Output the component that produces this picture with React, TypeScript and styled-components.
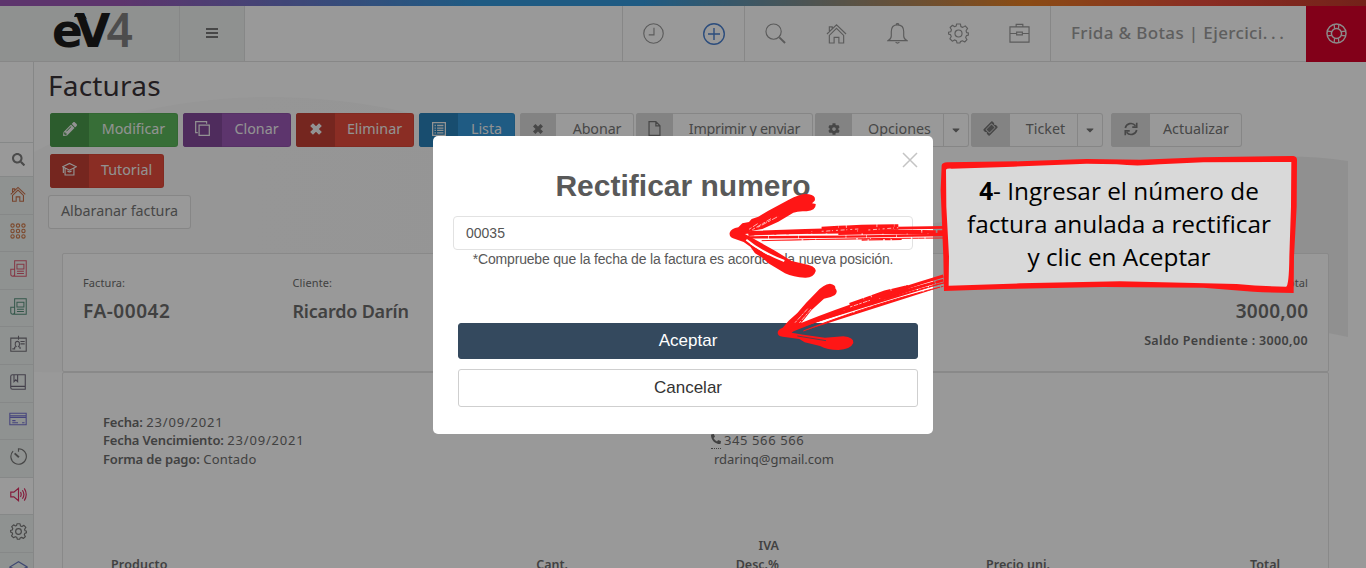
import React from "react";
import styled, { createGlobalStyle } from "styled-components";
import { FaPencilAlt, FaCog, FaPhoneAlt, FaCaretDown, FaTicketAlt, FaSearch } from "react-icons/fa";

const Global = createGlobalStyle`
  * { box-sizing: border-box; }
  body { margin: 0; background: #fff; font-family: "Noto Sans", sans-serif; overflow: hidden; }
`;

const Page = styled.div`
  position: relative;
  width: 1366px;
  height: 568px;
  overflow: hidden;
  display: flex;
  flex-direction: column;
  background: #fff;
`;
const RainbowBar = styled.div`
  height: 6px;
  flex: none;
  background: linear-gradient(90deg, #9b59b6 0%, #9b59b6 9%, #3498db 35%, #3498db 47%, #e67e22 75%, #e74c3c 88%, #c0392b 100%);
`;
const Header = styled.header`
  display: flex;
  height: 56px;
  flex: none;
  border-bottom: 1px solid #e2e2e2;
`;
const LogoCell = styled.div`
  width: 180px;
  background: #eef2f1;
  border-right: 1px solid #dfe2e2;
`;
const LogoArt = styled.svg`
  display: block;
  overflow: visible;
`;
const MenuCell = styled.div`
  width: 65px;
  background: #eef2f1;
  border-right: 1px solid #dfe2e2;
  padding: 22px 0 0 26px;
  display: flex;
  flex-direction: column;
  gap: 2px;
`;
const MenuLine = styled.i`
  width: 12px;
  height: 2px;
  background: #777;
`;
const HeaderSpacer = styled.div`
  flex: 1;
`;
const IconGroup = styled.div`
  display: flex;
  border-left: 1px solid #e2e2e2;
`;
const IconCell = styled.div<{ $color?: string; $w?: number }>`
  width: ${(p) => p.$w ?? 61}px;
  display: flex;
  align-items: center;
  justify-content: center;
  color: ${(p) => p.$color ?? "#989898"};
`;
const Company = styled.div`
  width: 256px;
  border-left: 1px solid #e2e2e2;
  padding: 14px 0 0 20px;
  font-size: 17px;
  line-height: 25px;
  letter-spacing: 0.36px;
  color: #9d9d9d;
  font-weight: 500;
  white-space: nowrap;
`;
const Dots = styled.span`
  letter-spacing: 3.6px;
`;
const HelpCell = styled.div`
  width: 60px;
  height: 56px;
  padding-bottom: 2px;
  background: #d9002b;
  color: #e8e8e8;
  display: flex;
  align-items: center;
  justify-content: center;
`;

const Body = styled.div`
  display: flex;
  flex: 1;
  min-height: 0;
`;
const Sidebar = styled.nav`
  width: 34px;
  flex: none;
  border-right: 1px solid #dfe2e2;
  padding-top: 80px;
`;
const SideItem = styled.div<{ $h: number; $color: string; $plain?: boolean }>`
  height: ${(p) => p.$h}px;
  border-top: 1px solid #e0e3e3;
  background: ${(p) => (p.$plain ? "#fff" : "#eff4f2")};
  color: ${(p) => p.$color};
  display: flex;
  align-items: center;
  justify-content: center;
  padding-left: 3px;
  padding-bottom: 4px;
  &:first-child { padding-bottom: 0; }
`;
const Main = styled.main`
  position: relative;
  flex: 1;
  min-width: 0;
`;
const Backdrop = styled.svg`
  position: absolute;
  left: 0;
  top: 0;
`;
const Content = styled.div`
  position: relative;
`;
const Title = styled.h1`
  margin: 0;
  padding: 5px 0 0 14px;
  height: 51px;
  font-size: 28px;
  line-height: 37px;
  letter-spacing: 0.2px;
  font-weight: 400;
  color: #3a3238;
`;
const Toolbar = styled.div`
  display: flex;
  flex-wrap: wrap;
  padding-left: 16px;
  row-gap: 7px;
`;
const Btn = styled.div<{ $w: number; $bg?: string; $gap?: number }>`
  width: ${(p) => p.$w}px;
  height: 34px;
  margin-right: ${(p) => p.$gap ?? 5}px;
  display: flex;
  border-radius: 3px;
  overflow: hidden;
  background: ${(p) => p.$bg ?? "#fff"};
  color: ${(p) => (p.$bg ? "#f4f4f4" : "#777")};
  box-shadow: inset 0 0 0 1px ${(p) => (p.$bg ? "rgba(0,0,0,.06)" : "#e0e0e0")};
  font-size: 14.3px;
`;
const BtnIcon = styled.span<{ $w?: number; $bg?: string }>`
  width: ${(p) => p.$w ?? 39}px;
  flex: none;
  display: flex;
  align-items: center;
  justify-content: center;
  padding-bottom: 3px;
  background: ${(p) => p.$bg ?? "#dadada"};
`;
const TicketIcon = styled(FaTicketAlt)`
  transform: rotate(-45deg);
`;
const BtnLabel = styled.span<{ $ls?: number; $pad?: number }>`
  flex: 1;
  text-align: center;
  line-height: 31px;
  padding-left: ${(p) => p.$pad ?? 0}px;
  letter-spacing: ${(p) => p.$ls ?? 0}px;
  white-space: nowrap;
`;
const BtnCaret = styled.span`
  width: 26px;
  flex: none;
  border-left: 1px solid #e0e0e0;
  display: flex;
  align-items: center;
  justify-content: center;
  padding: 0 2px 1px 0;
`;
const SubBar = styled.div`
  padding: 7px 0 24px 14px;
`;
const Card = styled.section`
  width: 1267px;
  margin-left: 28px;
  border: 1px solid #e4e4e4;
  background: #fff;
  border-radius: 2px;
`;
const Summary = styled(Card)`
  height: 119px;
  padding: 20px 20px 0;
  display: flex;
`;
const Field = styled.div<{ $w?: number; $right?: boolean }>`
  ${(p) => (p.$w ? `width: ${p.$w}px;` : "flex: 1;")}
  ${(p) => (p.$right ? "text-align: right;" : "")}
  color: #6d6d6d;
`;
const FieldLabel = styled.div`
  font-size: 11px;
  line-height: 18px;
  letter-spacing: 0.1px;
`;
const FieldValue = styled.div<{ $ls?: number; $size?: number }>`
  font-size: ${(p) => p.$size ?? 18}px;
  line-height: 26px;
  margin-top: 6px;
  font-weight: 600;
  letter-spacing: ${(p) => p.$ls ?? 0}px;
  margin-right: ${(p) => -(p.$ls ?? 0)}px;
`;
const Pending = styled.div`
  font-size: 12.5px;
  line-height: 18px;
  margin-top: 8px;
  font-weight: 600;
  letter-spacing: 0.36px;
`;
const Detail = styled(Card)`
  height: 260px;
  padding: 40px 0 0 40px;
`;
const Columns = styled.div`
  display: flex;
  height: 123px;
  font-size: 13px;
  line-height: 18.5px;
  color: #6d6d6d;
`;
const Col = styled.div<{ $w: number }>`
  width: ${(p) => p.$w}px;
`;
const Line = styled.div<{ $indent?: number; $ls?: number; $h?: number }>`
  height: ${(p) => p.$h ?? 18.5}px;
  padding-left: ${(p) => p.$indent ?? 0}px;
  letter-spacing: ${(p) => p.$ls ?? 0.2}px;
  white-space: nowrap;
  b { font-weight: 600; letter-spacing: -0.15px; }
`;
const Digits = styled.span`
  letter-spacing: 0.8px;
`;
const PhoneMark = styled.abbr`
  display: inline-block;
  width: 10px;
  height: 18px;
  font-size: 10px;
  border-bottom: 1px dotted #6d6d6d;
  margin-right: 3px;
  vertical-align: top;
`;
const TableHead = styled.div`
  display: grid;
  grid-template-columns: 357px 100px 211px 271px 230px;
  align-items: end;
  padding-left: 8px;
  font-size: 12.5px;
  line-height: 19px;
  font-weight: 600;
  color: #6d6d6d;
`;
const Th = styled.div<{ $left?: boolean }>`
  text-align: ${(p) => (p.$left ? "left" : "right")};
  letter-spacing: ${(p) => (p.$left ? 0.15 : 0)}px;
`;

const Shade = styled.div`
  position: absolute;
  inset: 0;
  background: rgba(0, 0, 0, 0.4);
`;
const Modal = styled.div`
  position: absolute;
  left: 433px;
  top: 136px;
  width: 500px;
  height: 297.5px;
  border-radius: 5px;
  background: #fff;
  font-family: "Liberation Sans", Arial, sans-serif;
  padding: 31px 20px 0;
`;
const Close = styled.svg`
  position: absolute;
  right: 15px;
  top: 16px;
`;
const ModalTitle = styled.h2`
  margin: 0;
  font-size: 30px;
  line-height: 37px;
  text-align: center;
  color: #595959;
`;
const Input = styled.div`
  margin-top: 12px;
  height: 34px;
  border: 1px solid #e2e2e2;
  border-radius: 4px;
  padding-left: 12px;
  font-size: 14px;
  line-height: 33px;
  color: #555;
`;
const Hint = styled.p`
  margin: 0;
  font-size: 14px;
  line-height: 19px;
  letter-spacing: -0.18px;
  text-align: center;
  color: #595959;
  white-space: nowrap;
`;
const Actions = styled.div`
  padding: 54px 0 0 5px;
  width: 465px;
  display: flex;
  flex-direction: column;
  gap: 10px;
`;
const Action = styled.div<{ $primary?: boolean }>`
  height: ${(p) => (p.$primary ? 36 : 38)}px;
  border-radius: 3px;
  border: 1px solid ${(p) => (p.$primary ? "#34495e" : "#cfcfcf")};
  background: ${(p) => (p.$primary ? "#34495e" : "#fff")};
  color: ${(p) => (p.$primary ? "#fff" : "#333")};
  font-size: 17px;
  line-height: ${(p) => (p.$primary ? 34 : 36)}px;
  text-align: center;
`;
const Marks = styled.svg`
  position: absolute;
  left: 0;
  top: 0;
`;
const Callout = styled.div`
  position: absolute;
  left: 946px;
  top: 174px;
  width: 346px;
  text-align: center;
  font-family: "Open Sans", "Noto Sans", sans-serif;
  font-size: 24.35px;
  line-height: 33px;
  color: #000;
  white-space: nowrap;
`;

type IconProps = { size?: number; w?: number; children: React.ReactNode };
const Icon = ({ size = 21, w = 1.2, children }: IconProps) => (
  <svg width={size} height={size} viewBox="0 0 22 22" fill="none" stroke="currentColor" strokeWidth={w}>
    {children}
  </svg>
);

const House = () => (
  <path d="M1 11.5 11 2l10 9.5M3.5 9.5V4h3v2.5M3.5 13v8h5v-6h5v6h5v-8L11 5.5z" />
);
const Gear = () => (
  <>
    <circle cx="11" cy="11" r="3.7" />
    <path d="M9 1h4l.5 2.8 2 .8L18 3l2.5 2.7-1.6 2.4.6 2 2.2.5v1.8l-2.4.8-.8 2 1.4 2.3-2.4 2.4-2.5-1.3-2 .9L12.5 21h-3l-.7-2.5-2-.8L4.5 19 2 16.5l1.4-2.3-.8-2L.4 11.5V9.7l2.5-.6.7-2L2.2 4.7 4.7 2.4 7 3.9l1.6-.7z" strokeLinejoin="round" />
  </>
);
const News = () => (
  <>
    <path d="M6 21V1h15v20H3.5Q1 21 1 18.5V12h5M1 18.5Q1 21 3.5 21T6 18.5" />
    <path d="M9 5.5h9v6H9zM9 14.5h9M9 17.5h9" />
  </>
);
const Cross = ({ size }: { size: number }) => (
  <svg width={size} height={size} viewBox="0 0 12 12">
    <path d="M2.2 2.2 9.8 9.8M9.8 2.2 2.2 9.8" stroke="currentColor" strokeWidth="3.4" />
  </svg>
);

const Logo = () => (
  <LogoArt width="179" height="55">
    <text x="52" y="41" fontFamily="DejaVu Sans" fontWeight="700" fontSize="45.5" letterSpacing="-7.5" fill="#1c1c1c">eV</text>
    <path d="M75 8h9l3 5q-4-3-13-2z" fill="#1c1c1c" />
    <text x="106.5" y="41" fontFamily="Noto Sans" fontWeight="600" fontSize="46" fill="#808080">4</text>
  </LogoArt>
);

const Arrows = () => (
  <Marks width="1366" height="568" viewBox="0 0 1366 568">
    <g transform="translate(725 190) scale(.33333)" fill="#ff1616" stroke="#ff1616">
      <path stroke="none" d="M14 128Q18 116 40 112L52 100 72 96 80 87 100 80 130 62 190 30Q232 8 252 13Q274 17 269 32L261 40 272 42Q274 62 245 64Q220 62 205 68L160 95 112 117 75 124 60 132 78 142 150 182 200 213 235 221Q275 228 272 244Q266 264 240 263Q205 262 180 250L130 220 112 203 90 190 76 170 56 156 24 145Q12 140 14 128z" />
      <path d="M50 128Q330 116 660 112" strokeWidth="8" />
      <path d="M70 133Q330 120 660 126" strokeWidth="10" strokeDasharray="190 3 40 5 90 2" />
      <path d="M290 118 410 112 520 111" strokeWidth="16" strokeDasharray="50 1 22 2 90 2" />
      <path d="M340 132Q500 128 660 132" strokeWidth="6" strokeDasharray="70 3 60 2" />
      <path d="M70 142Q350 141 660 135" strokeWidth="7" strokeDasharray="60 2 88 2 140 2" />
      <path d="M110 152Q330 146 655 144" strokeWidth="3" strokeDasharray="120 5 36 3" />
      <path d="M410 150 530 148" strokeWidth="4" strokeDasharray="18 3 44 4" />
      <g stroke="#fff" fill="none">
        <path d="M82 119 138 86M98 112 160 79M72 118 98 101" strokeWidth="2" strokeDasharray="9 5 17 4" />
        <path d="M64 149Q110 187 178 213" strokeWidth="6" />
        <path d="M76 161 130 194" strokeWidth="3" />
        <path d="M88 137 250 133" strokeWidth="2" strokeDasharray="60 6 30 8" />
        <path d="M290 124 400 117M430 120 520 113" strokeWidth="2" strokeDasharray="6 8 12 5 3 9" />
      </g>
    </g>
    <g transform="translate(770 275) scale(.33333)" fill="#ff1616" stroke="#ff1616">
      <path stroke="none" d="M23 174Q23 163 38 158L56 137 82 114 108 84 140 51Q160 28 180 26Q198 29 196 40Q205 50 195 60Q181 69 162 71L125 105 98 139 80 158 65 173 100 179 165 188 220 184Q252 187 250 204Q242 223 205 225Q172 225 150 213L104 202 88 192 38 185Q23 183 23 174z" />
      <path d="M55 165Q220 94 520 3" strokeWidth="9" />
      <path d="M62 168Q280 78 520 16" strokeWidth="8" strokeDasharray="170 3 29 2 80 2" />
      <path d="M240 91 345 54 415 37" strokeWidth="15" strokeDasharray="45 1 22 2 60 2" />
      <path d="M85 158Q290 83 525 23" strokeWidth="4" strokeDasharray="100 4 30 3" />
      <path d="M100 168Q300 88 520 34" strokeWidth="3" strokeDasharray="160 4 50 3" />
      <g fill="none">
        <path d="M75 143 115 99M88 144 125 100M240 96 300 76" stroke="#fff" strokeWidth="2" strokeDasharray="8 4 14 3" />
        <path d="M82 183 168 197" stroke="#34495e" strokeWidth="2.5" />
      </g>
    </g>
    <g transform="translate(920 140) scale(.33333)">
      <path fill="#ff1616" d="M65 76Q66 68 82 67L300 64 500 57 660 59 850 52 1120 48Q1131 50 1131 60L1130 200 1122 350 1121 459Q1060 459 1000 455L850 443 550 441 250 447 72 453 70 350 66 250 62 150z" />
      <path fill="#d9d9d9" d="M78 90Q79 85 95 86L280 80 500 71 590 73Q650 80 720 73L850 67 1114 66 1113 200 1108 350Q1107 438 1098 440Q1030 439 950 432L600 424 300 430 86 437 87 350 79 200z" />
    </g>
  </Marks>
);

export default function App() {
  return (
    <Page>
      <Global />
      <RainbowBar />
      <Header>
        <LogoCell><Logo /></LogoCell>
        <MenuCell><MenuLine /><MenuLine /><MenuLine /></MenuCell>
        <HeaderSpacer />
        <IconGroup>
          <IconCell><Icon><circle cx="11" cy="11" r="10.2" /><path d="M11.5 5v7.5H6" /></Icon></IconCell>
          <IconCell $w={60} $color="#4a80d0"><Icon size={22} w={1.4}><circle cx="11" cy="11" r="10.3" /><path d="M11 5v12M5 11h12" /></Icon></IconCell>
        </IconGroup>
        <IconGroup>
          <IconCell><Icon><circle cx="9" cy="9" r="8" /><path d="m15 15 6 6" strokeWidth="2" /></Icon></IconCell>
          <IconCell><Icon><House /></Icon></IconCell>
          <IconCell><Icon><path d="M1 18.5q3.5-2 3.5-5V9q0-7 6.5-7t6.5 7v4.5q0 3 3.5 5zM9.5 2q0-1.5 1.5-1.5T12.5 2M9 20q2 2 4 0" /></Icon></IconCell>
          <IconCell><Icon><Gear /></Icon></IconCell>
          <IconCell><Icon><path d="M1 4h20v16H1zM7.5 4V1.5h7V4M1 11h7M14 11h7M8 9.5h6v3H8z" /></Icon></IconCell>
        </IconGroup>
        <Company>Frida &amp; Botas | Ejercici<Dots>...</Dots></Company>
        <HelpCell>
          <Icon w={1.5}>
            <circle cx="11" cy="11" r="10" /><circle cx="11" cy="11" r="5.3" />
            <path d="M8.5 1.5 9 6M13.5 1.5 13 6M8.5 20.5 9 16M13.5 20.5 13 16M1.5 8.5 6 9M1.5 13.5 6 13M20.5 8.5 16 9M20.5 13.5 16 13" strokeWidth="1.3" />
          </Icon>
        </HelpCell>
      </Header>
      <Body>
        <Sidebar>
          <SideItem $h={34} $color="#7d7d7d" $plain><FaSearch size={13} /></SideItem>
          <SideItem $h={38} $color="#c8704a"><Icon size={16} w={1.5}><House /></Icon></SideItem>
          <SideItem $h={37} $color="#d07a4a">
            <Icon size={16} w={1.5}>
              {[3.5, 11, 18.5].map((y) => [3.5, 11, 18.5].map((x) => <circle key={`${x}-${y}`} cx={x} cy={y} r="2.3" />))}
            </Icon>
          </SideItem>
          <SideItem $h={38} $color="#dd5a72"><Icon size={17} w={1.3}><News /></Icon></SideItem>
          <SideItem $h={37} $color="#57917c"><Icon size={17} w={1.3}><News /></Icon></SideItem>
          <SideItem $h={38} $color="#74707a">
            <Icon size={17} w={1.4}><path d="M1 4h20v17H1zM11 1v5M13.5 8.5H19M13.5 11.5H19M3 18h3v-2l2-1q-2-2-1-5.5 2.500-2.500 5 0 1 3.500-1 5.500l2 1v2" /></Icon>
          </SideItem>
          <SideItem $h={38} $color="#716a7c"><Icon size={16} w={1.5}><path d="M21 1v20H3.5Q1 21 1 18.5V3.5Q1 1 3.5 1zM1 17h20M5.5 1v9.5L8 8l2.5 2.5V1" /></Icon></SideItem>
          <SideItem $h={37} $color="#7470d0">
            <Icon size={18} w={1.3}><path d="M1 4h20v14H1zM1 7h20M1 9h20M4 13h4M4 15.5h7M16 15.5h3" /></Icon>
          </SideItem>
          <SideItem $h={38} $color="#777"><Icon size={17} w={1.5}><path d="M11 5V1a10 10 0 1 1-7 3" /><path d="m6 7 5.5 5" strokeWidth="2.5" /></Icon></SideItem>
          <SideItem $h={37} $color="#dc2f63" $plain><Icon size={17} w={1.5}><path d="M1 8h4l6-5v16l-6-5H1zM13.5 8q2 3 0 6M16 5.5q4 5.5 0 11M18.5 3q5 8 0 16" /></Icon></SideItem>
          <SideItem $h={38} $color="#777"><Icon size={17} w={1.5}><Gear /></Icon></SideItem>
          <SideItem $h={38} $color="#6a78bd"><Icon size={19} w={1.3}><path d="m1 8 10-6 10 6v8l-10 5-10-5zM1 8l10 5 10-5" /></Icon></SideItem>
        </Sidebar>
        <Main>
          <Backdrop width="1332" height="506">
            <defs>
              <linearGradient id="hill" x1="0" x2="1">
                <stop offset="0" stopColor="#fbfbfb" />
                <stop offset=".5" stopColor="#f8f8f8" />
                <stop offset="1" stopColor="#f0f0f0" />
              </linearGradient>
            </defs>
            <path fill="url(#hill)" d="M0 90Q100 35 240 35Q380 37 480 90Q640 180 900 161Q1010 150 1110 115Q1220 85 1314 99V275Q1200 250 900 250Q500 320 0 310z" />
          </Backdrop>
          <Content>
            <Title>Facturas</Title>
            <Toolbar>
              <Btn $w={128} $bg="#5cb85c"><BtnIcon $bg="#4a9a4b"><FaPencilAlt size={14} /></BtnIcon><BtnLabel>Modificar</BtnLabel></Btn>
              <Btn $w={108} $bg="#9b59b6"><BtnIcon $bg="#844a9c"><Icon size={15} w={1.8}><path d="M6 6h15v15H6zM4 17H1V1h16v3" /></Icon></BtnIcon><BtnLabel>Clonar</BtnLabel></Btn>
              <Btn $w={118} $bg="#e74c3c"><BtnIcon $bg="#c44034"><Cross size={14} /></BtnIcon><BtnLabel>Eliminar</BtnLabel></Btn>
              <Btn $w={96} $bg="#3498db"><BtnIcon $bg="#2980b9"><Icon size={14} w={2}><path d="M1 1h20v20H1zM4 5.5h2M8 5.5h10M4 9.5h2M8 9.5h10M4 13h2M8 13h10M4 17h2M8 17h10" /></Icon></BtnIcon><BtnLabel>Lista</BtnLabel></Btn>
              <Btn $w={114} $gap={2}><BtnIcon $w={36}><Cross size={12} /></BtnIcon><BtnLabel $pad={4} $ls={-0.1}>Abonar</BtnLabel></Btn>
              <Btn $w={177} $gap={2}><BtnIcon $w={37}><Icon size={15} w={1.8}><path d="M3 1h10l6 6v14H3zM13 1v6h6" /></Icon></BtnIcon><BtnLabel $pad={3} $ls={-0.28}>Imprimir y enviar</BtnLabel></Btn>
              <Btn $w={154} $gap={2}><BtnIcon $w={37}><FaCog size={12} /></BtnIcon><BtnLabel $pad={4}>Opciones</BtnLabel><BtnCaret><FaCaretDown size={12} /></BtnCaret></Btn>
              <Btn $w={132} $gap={8}><BtnIcon><TicketIcon size={13} /></BtnIcon><BtnLabel $pad={4}>Ticket</BtnLabel><BtnCaret><FaCaretDown size={12} /></BtnCaret></Btn>
              <Btn $w={131} $gap={60}><BtnIcon><Icon size={14} w={2.6}><path d="M2 9.5A9 9 0 0 1 18 6M20 12.5A9 9 0 0 1 4 16M20 1v7h-7M2 21v-7h7" /></Icon></BtnIcon><BtnLabel>Actualizar</BtnLabel></Btn>
              <Btn $w={114} $bg="#e74c3c"><BtnIcon $bg="#c44034"><Icon size={15} w={1.7}><path d="M1 7 11 2l10 5-10 5zM4.5 9v10h13V9M2 8v8M8 13q3 3 6 0" /></Icon></BtnIcon><BtnLabel>Tutorial</BtnLabel></Btn>
            </Toolbar>
            <SubBar><Btn $w={143}><BtnLabel>Albaranar factura</BtnLabel></Btn></SubBar>
            <Summary>
              <Field $w={209.5}><FieldLabel>Factura:</FieldLabel><FieldValue $size={19} $ls={0.55}>FA-00042</FieldValue></Field>
              <Field><FieldLabel>Cliente:</FieldLabel><FieldValue $ls={-0.2}>Ricardo Darín</FieldValue></Field>
              <Field $right><FieldLabel>Total</FieldLabel><FieldValue $size={19} $ls={0.3}>3000,00</FieldValue><Pending>Saldo Pendiente : 3000,00</Pending></Field>
            </Summary>
            <Detail>
              <Columns>
                <Col $w={608}>
                  <Line $h={18}><b>Fecha:</b> <Digits>23/09/2021</Digits></Line>
                  <Line $h={19}><b>Fecha Vencimiento:</b> <Digits>23/09/2021</Digits></Line>
                  <Line><b>Forma de pago:</b> Contado</Line>
                </Col>
                <Col $w={400}>
                  <Line $h={18} />
                  <Line $h={19} $ls={0.6}><PhoneMark><FaPhoneAlt size={10} /></PhoneMark>345 566 566</Line>
                  <Line $indent={3} $ls={-0.05}>rdarinq@gmail.com</Line>
                </Col>
              </Columns>
              <TableHead>
                <Th $left>Producto</Th>
                <Th>Cant.</Th>
                <Th>IVA<br />Desc.%</Th>
                <Th>Precio uni.</Th>
                <Th>Total</Th>
              </TableHead>
            </Detail>
          </Content>
        </Main>
      </Body>
      <Shade />
      <Modal>
        <Close width="16" height="16" viewBox="0 0 16 16"><path d="m1 1 14 14M15 1 1 15" stroke="#c4c4c4" strokeWidth="1.5" /></Close>
        <ModalTitle>Rectificar numero</ModalTitle>
        <Input>00035</Input>
        <Hint>*Compruebe que la fecha de la factura es acorde a la nueva posición.</Hint>
        <Actions>
          <Action $primary>Aceptar</Action>
          <Action>Cancelar</Action>
        </Actions>
      </Modal>
      <Arrows />
      <Callout><b>4</b>- Ingresar el número de<br />factura anulada a rectificar<br />y clic en Aceptar</Callout>
    </Page>
  );
}
